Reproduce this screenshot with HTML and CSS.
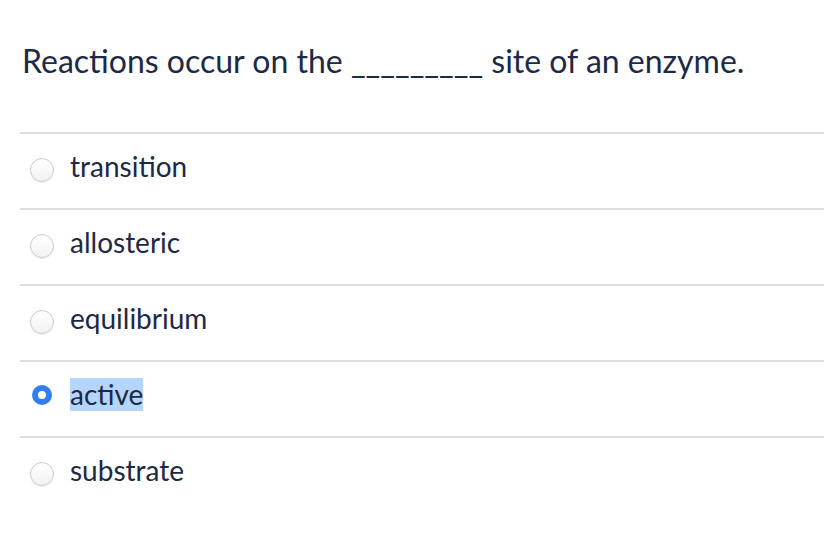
FILE: index.html
```html
<!DOCTYPE html>
<html>
<head>
<meta charset="utf-8">
<link rel="stylesheet" href="styles.css">
</head>
<body>
<div class="question">
  <p class="prompt">Reactions occur on the <span class="blank">_________</span> site of an enzyme.</p>
  <ul class="answers">
    <li class="answer"><span class="radio"></span><span class="label">transition</span></li>
    <li class="answer"><span class="radio"></span><span class="label">allosteric</span></li>
    <li class="answer"><span class="radio"></span><span class="label">equilibrium</span></li>
    <li class="answer"><span class="radio checked"></span><span class="label selected">active</span></li>
    <li class="answer"><span class="radio"></span><span class="label">substrate</span></li>
  </ul>
</div>
</body>
</html>
```

FILE: styles.css
```css
html, body {
  margin: 0;
  padding: 0;
  background: #ffffff;
}
body {
  font-family: Lato, "Open Sans", sans-serif;
  color: #1c2947;
}
.question {
  padding: 0 0 0 20px;
}
.prompt {
  margin: 0;
  padding: 39px 0 0 2px;
  height: 132px;
  box-sizing: border-box;
  font-size: 32px;
  line-height: 44px;
}
.answers {
  list-style: none;
  margin: 0;
  padding: 0;
}
.answer {
  display: flex;
  align-items: center;
  box-sizing: border-box;
  border-top: 2px solid #dddddd;
  padding: 16px 0 25px 10px;
}
.radio {
  width: 24px;
  height: 24px;
  box-sizing: border-box;
  border-radius: 50%;
  border: 1px solid #cccccc;
  background: linear-gradient(#ffffff, #f2f2f2);
  box-shadow: 0 1px 1px rgba(0,0,0,0.08);
  margin: 6px 16px 0 0;
  flex: none;
}
.radio.checked {
  width: 20px;
  height: 20px;
  margin: 0 18px 0 2px;
  border: 6px solid #2f7ff3;
  background: #ffffff;
  box-shadow: none;
}
.label {
  font-size: 28px;
  line-height: 33px;
}
.label.selected {
  background: #b4d5fe;
}
```
